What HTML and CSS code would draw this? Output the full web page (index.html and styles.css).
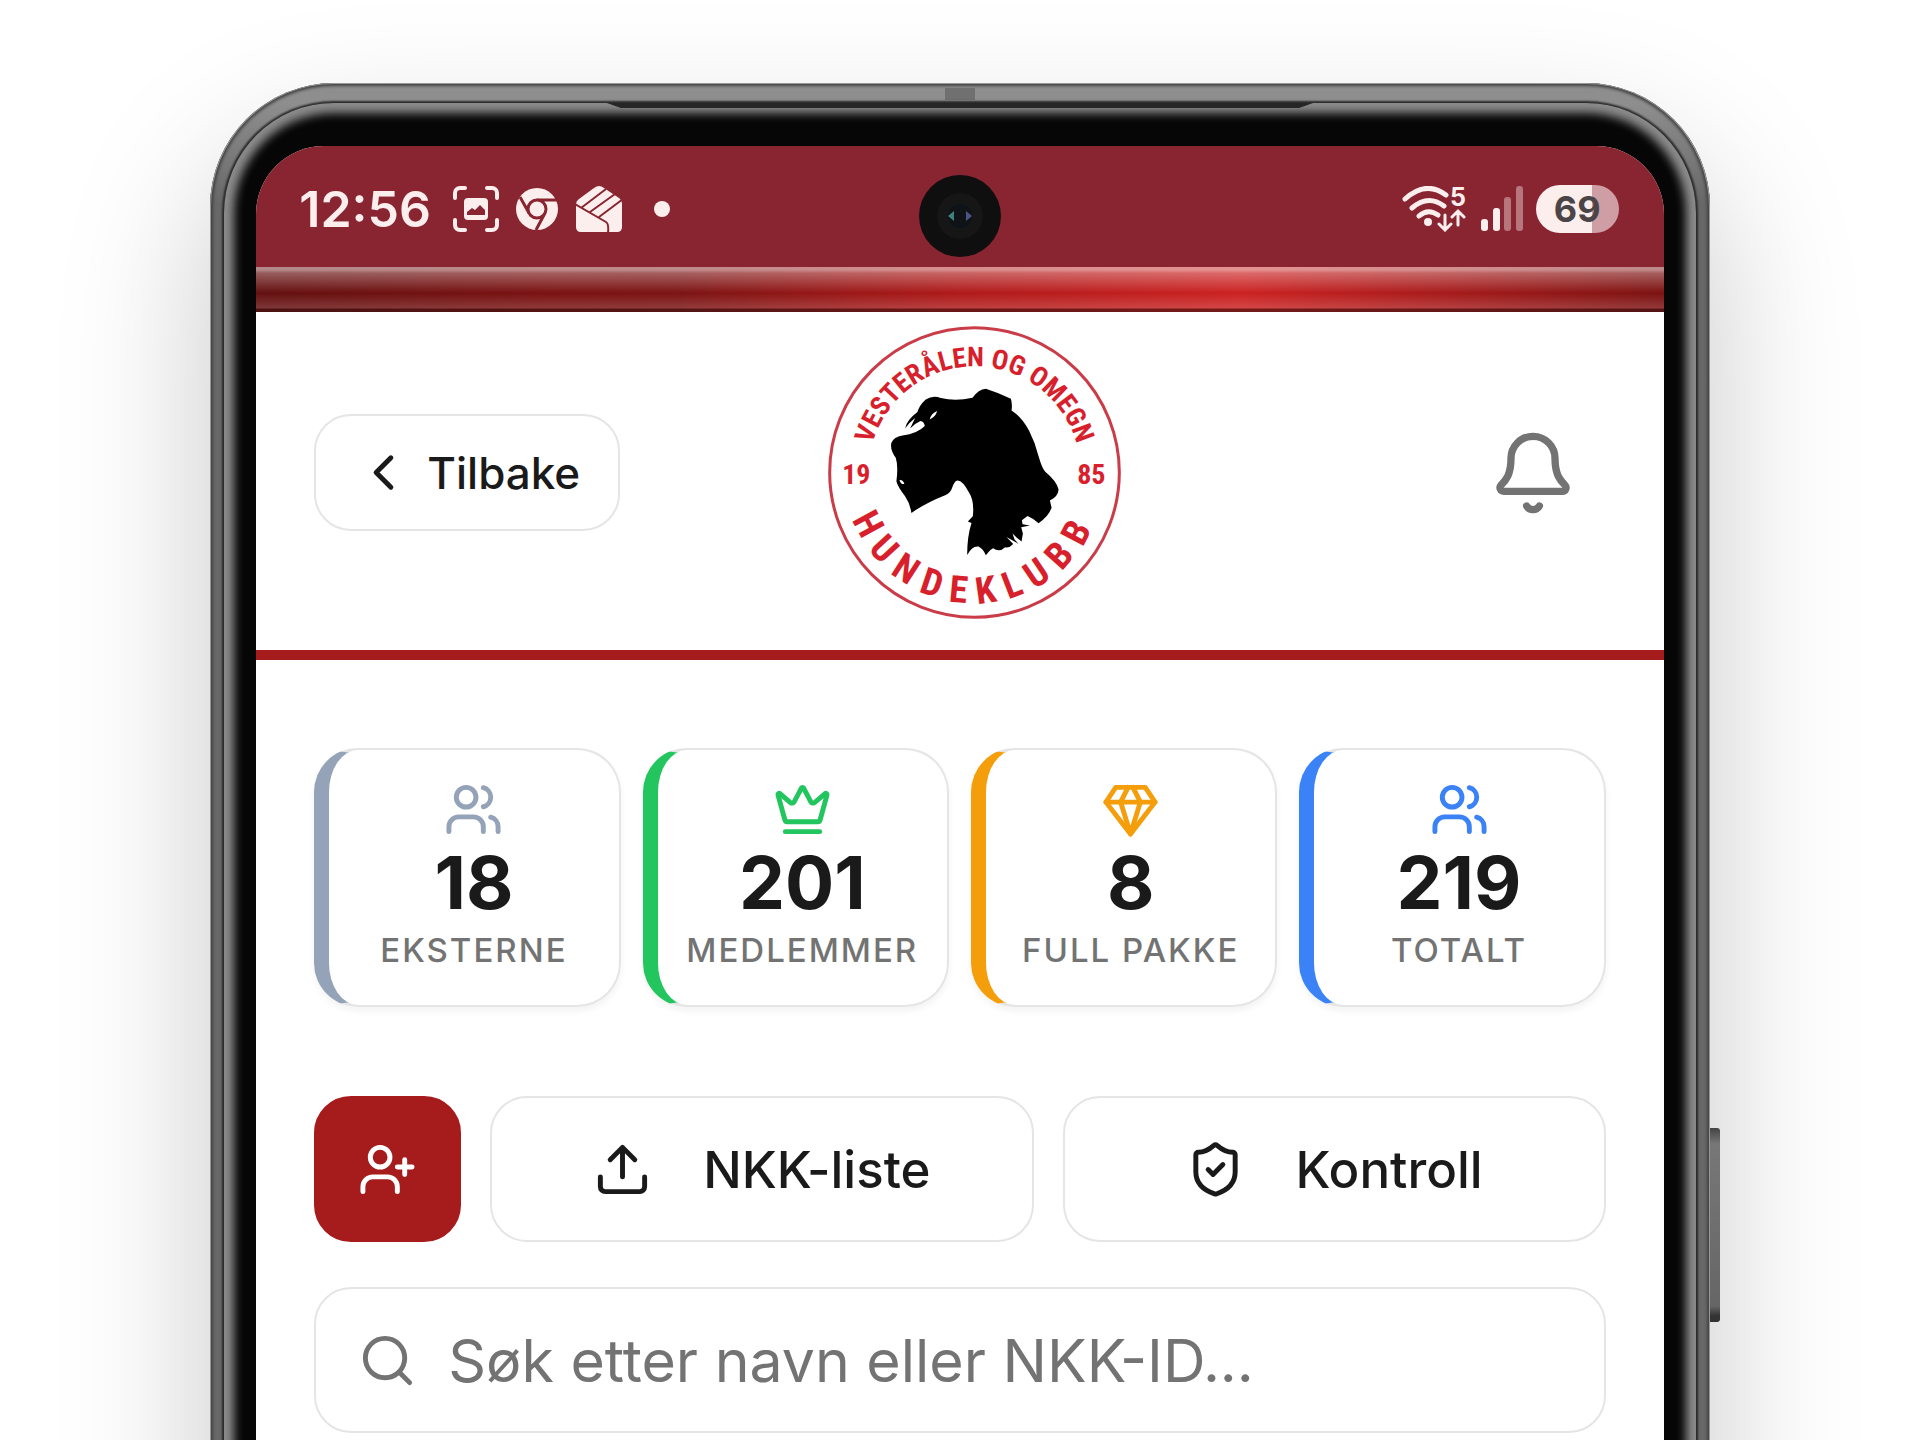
FILE: index.html
```html
<!DOCTYPE html>
<html lang="no">
<head>
  <meta charset="UTF-8">
  <meta name="viewport" content="width=device-width, initial-scale=1.0">
  <title>Vesterålen og Omegn Hundeklubb</title>
  <link rel="stylesheet" href="styles.css">
</head>
<body>

  <div class="stage">
    <div class="phone">
      <span class="antenna"></span>
      <span class="power-key"></span>
      <div class="bezel">
        <span class="speaker"></span>
        <div class="screen">

          <div class="status-bar">
            <span class="camera">
              <svg viewBox="0 0 82 82" width="82" height="82" aria-hidden="true">
                <circle cx="41" cy="41" r="41" fill="#0f0f0f"/>
                <circle cx="41" cy="41" r="23" fill="#161616"/>
                <circle cx="41" cy="41" r="12" fill="#0f1216"/>
                <path d="M29 41l6-5v10z" fill="#3f7f7c"/>
                <path d="M53 41l-6-5v10z" fill="#4a5685"/>
              </svg>
            </span>
            <div class="status-left">
              <span class="clock">12:56</span>
              <svg viewBox="0 0 46 46" width="46" height="46" aria-hidden="true">
                <path d="M2 12V7a5 5 0 0 1 5-5h5M34 2h5a5 5 0 0 1 5 5v5M44 34v5a5 5 0 0 1-5 5h-5M12 44H7a5 5 0 0 1-5-5v-5" fill="none" stroke="#fdeeee" stroke-width="4" stroke-linecap="round"/>
                <rect x="11" y="12" width="24" height="22" rx="4" fill="#fdeeee"/>
                <path d="M14 29v-3l5-4 3 2 5-5 5 5v5z" fill="#892531"/>
              </svg>
              <svg viewBox="0 0 42 42" width="42" height="42" aria-hidden="true">
                <circle cx="21" cy="21" r="21" fill="#fdeeee"/>
                <path d="M21 12h20M13 25L4 9M29 25L20 42" fill="none" stroke="#892531" stroke-width="3"/>
                <circle cx="21" cy="21" r="9" fill="#fdeeee" stroke="#892531" stroke-width="3"/>
              </svg>
              <svg viewBox="0 0 48 48" width="48" height="48" aria-hidden="true">
                <path d="M1 20q0-4 3-6L19 3q5-4 10 0l15 10q3 2 3 6v23q0 5-5 5H6q-5 0-5-5z" fill="#fdeeee"/>
                <path d="M0 19l31 18q3 2 2 11M6 23L31 4M15 27L40 9M24 32L48 14" fill="none" stroke="#892531" stroke-width="2"/>
              </svg>
              <span class="more-dot"></span>
            </div>
            <div class="status-right">
              <svg viewBox="0 0 66 46" width="66" height="46" aria-hidden="true">
                <g fill="none" stroke="#fdeeee" stroke-width="5" stroke-linecap="round">
                  <path d="M3 13Q24-6 44 9M10 22Q26 8 42 20M17 30Q26 22 36 29"/>
                  <path d="M43 29v14M37 38l6 6 6-6M56 39V26M50 31l6-6 6 6" stroke-width="3"/>
                </g>
                <circle cx="26" cy="36" r="4" fill="#fdeeee"/>
                <text class="wifi-band" x="48" y="20">5</text>
              </svg>
              <svg viewBox="0 0 42 46" width="42" height="46" aria-hidden="true" fill="#fdeeee">
                <rect x="0" y="33" width="7" height="12" rx="3"/>
                <rect x="12" y="22" width="7" height="23" rx="3"/>
                <rect x="23" y="11" width="7" height="34" rx="3" opacity=".4"/>
                <rect x="35" y="0" width="7" height="45" rx="3" opacity=".4"/>
              </svg>
              <span class="battery">69</span>
            </div>
          </div>
          <div class="shine"></div>

          <header class="header">
            <button class="btn back" type="button">
              <svg class="icon" viewBox="0 0 24 24" aria-hidden="true"><path d="m15 18-6-6 6-6"/></svg>
              Tilbake
            </button>
            <svg class="logo" viewBox="57 50 878 878" role="img" aria-label="Vesterålen og Omegn Hundeklubb 1985">
              <defs>
                <path id="arc-top" d="M178 489A318 318 0 0 1 814 489"/>
                <path id="arc-bottom" d="M104 489A392 392 0 0 0 888 489"/>
              </defs>
              <circle cx="496" cy="489" r="434" fill="#fff" stroke="#c93c48" stroke-width="9"/>
              <text class="logo-top"><textPath href="#arc-top" startOffset="50%">VESTERÅLEN OG OMEGN</textPath></text>
              <text class="logo-bottom"><textPath href="#arc-bottom" startOffset="50%">HUNDEKLUBB</textPath></text>
              <text class="logo-year" x="142" y="522">19</text>
              <text class="logo-year" x="846" y="522">85</text>
              <path d="M288 357Q292 333 325 308Q330 288 350 270Q372 256 395 266Q440 276 490 265Q508 240 530 238Q568 250 605 268Q610 285 607 303Q640 325 660 365Q678 400 688 440Q698 475 708 487Q742 515 748 540Q746 562 722 573L727 595Q718 620 688 641Q672 626 655 619L638 632L640 644L662 648L636 653L641 672L637 696L622 684L610 672L616 690L628 703L592 682L612 703Q600 716 588 713Q570 730 552 716Q545 718 530 737Q522 718 508 711Q490 708 474 736Q474 680 487 640L476 636L491 620Q496 575 480 550Q460 512 445 513Q436 514 429 535Q424 552 408 557Q350 580 307 610Q302 580 288 560Q265 530 262 515Q268 470 260 445Q242 420 247 400Q254 382 280 378Q325 373 347 350Q345 336 334 335Q318 342 303 357L318 326Q300 340 288 357Z"/>
              <path d="M362 330Q366 312 384 305Q380 322 362 330ZM271 512Q280 510 286 522Q278 528 271 512Z" fill="#fff"/>
            </svg>
            <button class="bell" type="button" aria-label="Varsler">
              <svg class="icon icon-lg" viewBox="0 0 24 24" aria-hidden="true"><path d="M10.268 21a2 2 0 0 0 3.464 0"/><path d="M3.262 15.326A1 1 0 0 0 4 17h16a1 1 0 0 0 .74-1.673C19.41 13.956 18 12.499 18 8A6 6 0 0 0 6 8c0 4.499-1.411 5.956-2.738 7.326"/></svg>
            </button>
          </header>

          <main class="content">
            <section class="stats">
              <div class="stat slate">
                <svg class="icon" viewBox="0 0 24 24" aria-hidden="true"><path d="M16 21v-2a4 4 0 0 0-4-4H6a4 4 0 0 0-4 4v2"/><circle cx="9" cy="7" r="4"/><path d="M22 21v-2a4 4 0 0 0-3-3.87M16 3.13a4 4 0 0 1 0 7.75"/></svg>
                <span class="stat-value">18</span>
                <span class="stat-label">Eksterne</span>
              </div>
              <div class="stat green">
                <svg class="icon" viewBox="0 0 24 24" aria-hidden="true"><path d="M11.562 3.266a.5.5 0 0 1 .876 0L15.39 8.87a1 1 0 0 0 1.516.294L21.183 5.5a.5.5 0 0 1 .798.519l-2.834 10.246a1 1 0 0 1-.956.734H5.81a1 1 0 0 1-.957-.734L2.02 6.02a.5.5 0 0 1 .798-.519l4.276 3.664a1 1 0 0 0 1.516-.294z"/><path d="M5 21h14"/></svg>
                <span class="stat-value">201</span>
                <span class="stat-label">Medlemmer</span>
              </div>
              <div class="stat amber">
                <svg class="icon" viewBox="0 0 24 24" aria-hidden="true"><path d="M6 3h12l4 6-10 13L2 9Z"/><path d="M11 3 8 9l4 13 4-13-3-6"/><path d="M2 9h20"/></svg>
                <span class="stat-value">8</span>
                <span class="stat-label">Full pakke</span>
              </div>
              <div class="stat blue">
                <svg class="icon" viewBox="0 0 24 24" aria-hidden="true"><path d="M16 21v-2a4 4 0 0 0-4-4H6a4 4 0 0 0-4 4v2"/><circle cx="9" cy="7" r="4"/><path d="M22 21v-2a4 4 0 0 0-3-3.87M16 3.13a4 4 0 0 1 0 7.75"/></svg>
                <span class="stat-value">219</span>
                <span class="stat-label">Totalt</span>
              </div>
            </section>

            <div class="actions">
              <button class="btn add" type="button" aria-label="Legg til medlem">
                <svg class="icon" viewBox="0 0 24 24" aria-hidden="true"><path d="M16 21v-2a4 4 0 0 0-4-4H6a4 4 0 0 0-4 4v2"/><circle cx="9" cy="7" r="4"/><path d="M19 8v6M22 11h-6"/></svg>
              </button>
              <button class="btn action" type="button">
                <svg class="icon" viewBox="0 0 24 24" aria-hidden="true"><path d="M21 15v4a2 2 0 0 1-2 2H5a2 2 0 0 1-2-2v-4"/><path d="m17 8-5-5-5 5M12 3v12"/></svg>
                NKK-liste
              </button>
              <button class="btn action" type="button">
                <svg class="icon" viewBox="0 0 24 24" aria-hidden="true"><path d="M20 13c0 5-3.5 7.5-7.66 8.95a1 1 0 0 1-.67-.01C7.5 20.5 4 18 4 13V6a1 1 0 0 1 1-1c2 0 4.5-1.2 6.24-2.72a1.17 1.17 0 0 1 1.52 0C14.51 3.81 17 5 19 5a1 1 0 0 1 1 1z"/><path d="m9 12 2 2 4-4"/></svg>
                Kontroll
              </button>
            </div>

            <label class="search">
              <svg class="icon" viewBox="0 0 24 24" aria-hidden="true"><circle cx="11" cy="11" r="8"/><path d="m21 21-4.3-4.3"/></svg>
              <input type="text" placeholder="Søk etter navn eller NKK-ID..." aria-label="Søk etter navn eller NKK-ID">
            </label>
          </main>

        </div>
      </div>
    </div>
  </div>

</body>
</html>
```
FILE: styles.css
```css
* {
  box-sizing: border-box;
}

body {
  margin: 0;
  background-color: #fff;
  font-family: Inter, "Liberation Sans", sans-serif;
  color: #1a1a1a;
}

/* phone frame */
.stage {
  height: 100vh;
  padding-top: 83px;
  overflow: hidden;
}

.phone {
  position: relative;
  display: flex;
  width: 78.1%;
  min-height: 130vh;
  margin: 0 auto;
  padding: 20px 14px 0;
  border-radius: 124px 124px 0 0;
  background: linear-gradient(#8e8e8e 0, #8e8e8e 20px, #686868 120px);
  box-shadow:
    inset 0 0 0 1px #999,
    inset 0 0 3px 3px #444,
    0 70px 150px rgba(0, 0, 0, 0.22);
}

.bezel {
  position: relative;
  display: flex;
  flex: 1;
  padding: 43px 32px 0;
  border-radius: 110px 110px 0 0;
  background-color: #060606;
  box-shadow:
    0 0 2px 2px #2a2a2a,
    inset 0 0 10px 10px #8c8c8c;
}

.antenna {
  position: absolute;
  top: 5px;
  left: 49%;
  width: 30px;
  height: 12px;
  background-color: #707070;
}

.speaker {
  position: absolute;
  top: 0;
  left: 26%;
  right: 26%;
  height: 5px;
  background-color: #262626;
  clip-path: polygon(0 0, 100% 0, 98% 100%, 2% 100%);
}

.power-key {
  position: absolute;
  top: 1045px;
  right: -10px;
  width: 10px;
  height: 194px;
  border-radius: 0 3px 3px 0;
  background: linear-gradient(#444, #777 16px, #666 178px, #333 188px);
}

.screen {
  flex: 1;
  min-width: 0;
  border-radius: 68px 68px 0 0;
  background-color: #fff;
  overflow: hidden;
}

/* status bar */
.status-bar {
  position: relative;
  display: flex;
  justify-content: space-between;
  align-items: center;
  height: 121px;
  padding: 4px 45px 0 43px;
  background-color: #892531;
  color: #fdeeee;
}

.status-left, .status-right {
  display: flex;
  align-items: center;
}

.status-left {
  gap: 17px;
}

.status-right {
  gap: 13px;
}

.clock {
  font-size: 50px;
  font-weight: 600;
  line-height: 48px;
  margin-right: 5px;
}

.more-dot {
  width: 16px;
  height: 16px;
  margin-left: 14px;
  border-radius: 50%;
  background-color: #fdeeee;
}

.camera {
  position: absolute;
  top: 29px;
  left: calc(50% - 41px);
}

.camera svg {
  display: block;
}

.wifi-band {
  font-size: 25px;
  font-weight: 700;
  fill: #fdeeee;
}

.battery {
  width: 83px;
  border-radius: 24px;
  background: linear-gradient(90deg, #fdeeee 68%, #cf9ea4 68%);
  color: #4b4548;
  font-size: 36px;
  font-weight: 700;
  line-height: 48px;
  text-align: center;
}

.shine {
  height: 45px;
  background:
    linear-gradient(rgba(255, 255, 255, 0.5) 0, rgba(255, 255, 255, 0.5) 3px, rgba(255, 255, 255, 0.32) 6px, rgba(255, 255, 255, 0) 26px, rgba(255, 255, 255, 0.16) 41px, rgba(60, 20, 20, 0.6) 42px, rgba(60, 20, 20, 0.6) 45px),
    linear-gradient(90deg, #641010 0, #7a1212 20%, #7c1414 30%, #b01a1a 50%, #cc2222 70%, #a31a1a 86%, #7c1212 100%);
}

/* header */
.header {
  display: grid;
  grid-template-columns: 1fr auto 1fr;
  align-items: center;
  padding: 14px 58px 31px;
  border-bottom: 10px solid #a61b1b;
}

.icon {
  flex: none;
  width: 59px;
  height: 59px;
  fill: none;
  stroke: currentColor;
  stroke-width: 2;
  stroke-linecap: round;
  stroke-linejoin: round;
}

.icon-lg {
  width: 88px;
  height: 88px;
}

.btn {
  display: flex;
  justify-content: center;
  align-items: center;
  border: 2px solid #e5e5e5;
  border-radius: 37px;
  background-color: #fff;
  color: #1a1a1a;
  font-family: inherit;
  font-weight: 500;
  cursor: pointer;
}

.back {
  justify-self: start;
  gap: 14px;
  height: 117px;
  padding: 0 38px;
  font-size: 44px;
}

.logo {
  width: 293px;
  height: 293px;
  margin-left: 29px;
}

.logo text {
  font-family: "Liberation Sans Narrow", "Roboto Condensed", "DejaVu Sans Condensed", sans-serif;
  font-weight: bold;
  text-anchor: middle;
  fill: #d81f2c;
}

.logo .logo-top {
  font-size: 82px;
}

.logo .logo-bottom {
  font-size: 112px;
  letter-spacing: 32px;
}

.logo .logo-year {
  font-size: 84px;
}

.bell {
  justify-self: end;
  display: flex;
  padding: 29px;
  border: none;
  background: none;
  color: #737373;
  cursor: pointer;
}

/* content */
.content {
  padding: 88px 58px;
}

.stats {
  display: grid;
  grid-template-columns: repeat(4, 1fr);
  gap: 22px;
  margin-bottom: 89px;
}

.stat {
  display: flex;
  flex-direction: column;
  align-items: center;
  padding: 30px 0;
  border: 2px solid #e5e5e5;
  border-left: 15px solid;
  border-radius: 44px;
  box-shadow: 0 4px 7px rgba(0, 0, 0, 0.05);
}

.slate {
  border-left-color: #94a3b8;
}

.green {
  border-left-color: #22c55e;
}

.amber {
  border-left-color: #f59e0b;
}

.blue {
  border-left-color: #3b82f6;
}

.slate .icon {
  color: #94a3b8;
}

.green .icon {
  color: #22c55e;
}

.amber .icon {
  color: #f59e0b;
}

.blue .icon {
  color: #3b82f6;
}

.stat-value {
  font-size: 73px;
  font-weight: 700;
  line-height: 87px;
}

.stat-label {
  color: #737373;
  font-size: 33px;
  font-weight: 500;
  line-height: 49px;
  letter-spacing: 2px;
  text-transform: uppercase;
}

.actions {
  display: flex;
  gap: 29px;
  margin-bottom: 45px;
}

.add {
  width: 147px;
  height: 146px;
  border-color: #a61b1b;
  background-color: #a61b1b;
  color: #fff;
}

.action {
  flex: 1;
  gap: 51px;
  font-size: 51px;
}

.search {
  display: flex;
  align-items: center;
  gap: 31px;
  height: 146px;
  padding: 0 42px;
  border: 2px solid #e5e5e5;
  border-radius: 37px;
  color: #737373;
}

.search input {
  flex: 1;
  min-width: 0;
  padding: 0;
  border: none;
  outline: none;
  background: none;
  font-family: inherit;
  font-size: 59px;
  color: #1a1a1a;
}

.search input::placeholder {
  color: #737373;
}
```
